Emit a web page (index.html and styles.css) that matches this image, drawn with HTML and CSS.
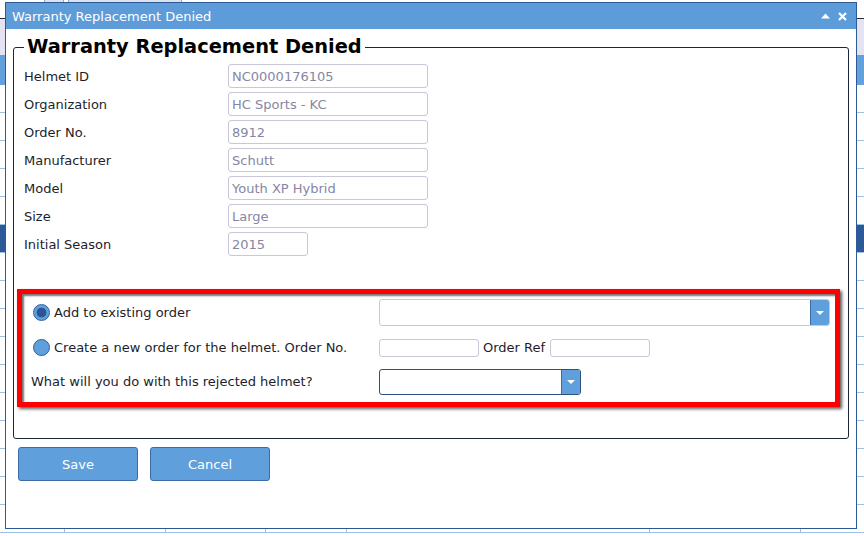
FILE: index.html
```html
<!DOCTYPE html>
<html lang="en">
<head>
  <meta charset="UTF-8">
  <meta name="viewport" content="width=device-width, initial-scale=1.0">
  <title>Warranty Replacement Denied</title>
  <link rel="stylesheet" href="styles.css">
</head>
<body>
  <!-- grid page that sits behind the dialog -->
  <div class="app">
    <div class="app-top">
      <span class="app-tab tab-a"></span>
      <span class="app-tab tab-b"></span>
    </div>
    <div class="app-filter"></div>
    <div class="grid-head"></div>
    <div class="grid-body">
      <div class="grid-row"></div>
      <div class="grid-row"></div>
      <div class="grid-row"></div>
      <div class="grid-row"></div>
      <div class="grid-row"></div>
      <div class="grid-row selected"></div>
      <div class="grid-row"></div>
      <div class="grid-row"></div>
      <div class="grid-row"></div>
      <div class="grid-row"></div>
      <div class="grid-row"></div>
      <div class="grid-row"></div>
      <div class="grid-row"></div>
      <div class="grid-row"></div>
      <div class="grid-row"></div>
      <div class="grid-row"></div>
    </div>
  </div>

  <div class="dialog">
    <div class="dialog-title">
      <span>Warranty Replacement Denied</span>
      <span class="title-icons">
        <svg width="9" height="6" viewBox="0 0 9 6"><polygon points="0,5.5 4.5,0.5 9,5.5" fill="#fff"/></svg>
        <svg width="9" height="9" viewBox="0 0 9 9"><path d="M1 1 L8 8 M8 1 L1 8" stroke="#fff" stroke-width="2.2"/></svg>
      </span>
    </div>

    <div class="dialog-body">
      <fieldset class="panel">
        <legend>Warranty Replacement Denied</legend>

        <div class="details">
          <label>Helmet ID</label>
          <input class="field" type="text" value="NC0000176105" readonly>
          <label>Organization</label>
          <input class="field" type="text" value="HC Sports - KC" readonly>
          <label>Order No.</label>
          <input class="field" type="text" value="8912" readonly>
          <label>Manufacturer</label>
          <input class="field" type="text" value="Schutt" readonly>
          <label>Model</label>
          <input class="field" type="text" value="Youth XP Hybrid" readonly>
          <label>Size</label>
          <input class="field" type="text" value="Large" readonly>
          <label>Initial Season</label>
          <input class="field short" type="text" value="2015" readonly>
        </div>

        <div class="choice-box">
          <label class="option">
            <input class="radio" type="radio" name="order" checked>
            <span>Add to existing order</span>
          </label>
          <div class="combo">
            <span class="combo-text"></span>
            <span class="combo-btn">
              <svg width="8" height="4" viewBox="0 0 8 4"><polygon points="0,0 8,0 4,4" fill="#fff"/></svg>
            </span>
          </div>

          <label class="option">
            <input class="radio" type="radio" name="order">
            <span>Create a new order for the helmet. Order No.</span>
          </label>
          <div class="order-fields">
            <input class="small-field" type="text">
            <span>Order Ref</span>
            <input class="small-field" type="text">
          </div>

          <label class="question">What will you do with this rejected helmet?</label>
          <div class="combo combo-focus">
            <span class="combo-text"></span>
            <span class="combo-btn">
              <svg width="8" height="4" viewBox="0 0 8 4"><polygon points="0,0 8,0 4,4" fill="#fff"/></svg>
            </span>
          </div>
        </div>
      </fieldset>

      <div class="actions">
        <button class="btn">Save</button>
        <button class="btn">Cancel</button>
      </div>
    </div>
  </div>
</body>
</html>
```

FILE: styles.css
```css
body {
  margin: 0;
  font-family: "DejaVu Sans", Verdana, sans-serif;
  font-size: 13px;
  color: #1e1e2a;
  background-color: #fff;
}

/* background page */
.app {
  height: 536px;
  overflow: hidden;
}
.app-top {
  display: flex;
  height: 18px;
  border-bottom: 1px solid #2b2b33;
}
.app-tab {
  height: 2px;
  background-color: #dde3ee;
  border: 1px solid #9aa6bc;
  border-top: none;
}
.tab-a {
  width: 18px;
  margin-left: 44px;
}
.tab-b {
  width: 112px;
  margin-left: 4px;
}
.app-filter {
  height: 36px;
  background-color: #e3e3f1;
}
.grid-head {
  height: 30px;
  background-color: #64a0dc;
}
.grid-body {
  background:
    linear-gradient(#9cc0e6, #9cc0e6) 64px 0 / 1px 100% no-repeat,
    linear-gradient(#9cc0e6, #9cc0e6) 165px 0 / 1px 100% no-repeat,
    linear-gradient(#9cc0e6, #9cc0e6) 265px 0 / 1px 100% no-repeat,
    linear-gradient(#9cc0e6, #9cc0e6) 346px 0 / 1px 100% no-repeat,
    linear-gradient(#9cc0e6, #9cc0e6) 649px 0 / 1px 100% no-repeat,
    linear-gradient(#9cc0e6, #9cc0e6) 800px 0 / 1px 100% no-repeat;
}
.grid-row {
  height: 27px;
  border-bottom: 1px solid #9cc0e6;
}
.grid-row.selected {
  background-color: #2d5a96;
}

/* dialog */
.dialog {
  position: absolute;
  left: 5px;
  top: 2px;
  width: 850px;
  height: 525px;
  border: 1px solid #2c5a96;
  background-color: #fff;
}
.dialog-title {
  display: flex;
  justify-content: space-between;
  align-items: center;
  height: 26px;
  padding: 0 9px 0 6px;
  background-color: #5e9cd9;
  color: #fff;
}
.title-icons {
  display: flex;
  align-items: center;
  gap: 8px;
}
.dialog-body {
  padding: 6px 7px 0 7px;
}
.panel {
  margin: 0;
  padding: 0;
  border: 1px solid #1b2738;
  border-radius: 3px;
}
.panel legend {
  margin-left: 10px;
  padding: 0 3px;
  font-size: 19.4px;
  line-height: 24px;
  font-weight: bold;
  color: #000;
}
.details {
  display: grid;
  grid-template-columns: 204px 200px;
  row-gap: 4px;
  align-items: center;
  padding: 5px 0 0 10px;
}
.field {
  box-sizing: border-box;
  width: 200px;
  height: 24px;
  padding: 0 3px;
  border: 1px solid #c8c8d8;
  border-radius: 3px;
  font-family: inherit;
  font-size: 13px;
  color: #8686a4;
  outline: none;
}
.field.short {
  width: 80px;
}

/* order choice */
.choice-box {
  display: grid;
  grid-template-columns: 348px 1fr;
  row-gap: 8px;
  align-items: center;
  margin: 33px 8px 31px 3px;
  padding: 5px 5px 7px 9px;
  border: 5px solid #ff0000;
  box-shadow: inset 2px 2px 2px rgba(0, 0, 0, 0.55), 2px 2px 3px rgba(0, 0, 0, 0.65);
}
.option {
  display: flex;
  align-items: center;
  gap: 4px;
  height: 27px;
  padding-left: 2px;
}
.radio {
  appearance: none;
  width: 17px;
  height: 17px;
  margin: 0;
  border: 1px solid #2e5f9e;
  border-radius: 50%;
  background-color: #5f9fdb;
}
.radio:checked {
  background: radial-gradient(circle, #2b5595 0 4.6px, #5f9fdb 5.2px);
}
.combo {
  box-sizing: border-box;
  display: flex;
  height: 27px;
  border: 1px solid #c8c8d8;
  border-radius: 3px;
  overflow: hidden;
}
.combo-text {
  flex: 1;
}
.combo-btn {
  display: flex;
  align-items: center;
  justify-content: center;
  width: 18px;
  background-color: #5f9fdb;
  border-left: 1px solid #3b6ca8;
}
.combo-focus {
  width: 202px;
  height: 26px;
  border-color: #2f4f80;
}
.order-fields {
  display: flex;
  align-items: center;
  gap: 4px;
}
.order-fields span {
  margin-left: 0;
  margin-right: 1px;
}
.small-field {
  box-sizing: border-box;
  width: 100px;
  height: 18px;
  border: 1px solid #c8c8d8;
  border-radius: 3px;
  outline: none;
}
.question {
  height: 26px;
  line-height: 26px;
}

/* buttons */
.actions {
  display: flex;
  gap: 12px;
  padding: 8px 0 0 5px;
}
.btn {
  width: 120px;
  height: 34px;
  border: 1px solid #3b6ca8;
  border-radius: 3px;
  background-color: #5f9fdb;
  color: #fff;
  font-family: inherit;
  font-size: 13px;
  cursor: pointer;
}
```
